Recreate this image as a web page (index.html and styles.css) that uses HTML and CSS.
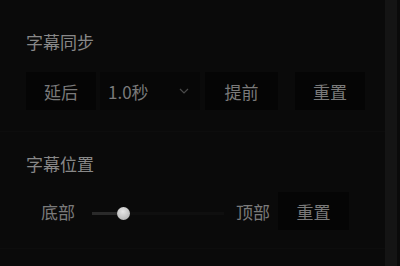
FILE: index.html
```html
<!DOCTYPE html>
<html lang="zh-CN">

<head>
    <meta charset="UTF-8">
    <meta name="viewport" content="width=device-width, initial-scale=1.0">
    <title>字幕设置</title>
    <link rel="stylesheet" href="styles.css">
</head>

<body>
    <div class="layout">
        <div class="panel">
            <div class="section sync">
                <h3>字幕同步</h3>
                <div class="row">
                    <button class="btn btn-delay">延后</button>
                    <div class="select">
                        <span>1.0秒</span>
                        <svg class="chevron" width="10" height="6" viewBox="0 0 10 6">
                            <path d="M1 1 L5 5 L9 1" fill="none" stroke="#4a4a4a" stroke-width="1.2"/>
                        </svg>
                    </div>
                    <button class="btn btn-ahead">提前</button>
                    <button class="btn btn-reset">重置</button>
                </div>
            </div>

            <div class="section position">
                <h3>字幕位置</h3>
                <div class="row">
                    <span class="label label-bottom">底部</span>
                    <div class="slider">
                        <div class="slider-fill"></div>
                        <div class="slider-thumb"></div>
                    </div>
                    <span class="label label-top">顶部</span>
                    <button class="btn btn-reset2">重置</button>
                </div>
            </div>
        </div>
        <div class="scrollbar"></div>
    </div>
</body>

</html>
```

FILE: styles.css
```css
body {
    font-family: "Noto Sans CJK SC", "Noto Sans", sans-serif;
    margin: 0;
    background-color: #0a0a0a;
    color: #7a7a7a;
}

.layout {
    display: flex;
    height: 266px;
}

.panel {
    width: 385px;
}

.scrollbar {
    width: 12px;
    background-color: #141414;
}

.section {
    padding-left: 26px;
    border-bottom: 1px solid #0d0d0d;
}

.section h3 {
    font-size: 17px;
    font-weight: normal;
    color: #888888;
    line-height: 24px;
    margin: 0;
}

.sync {
    padding-top: 30px;
    padding-bottom: 21px;
}

.position {
    padding-top: 20px;
    padding-bottom: 18px;
}

.sync h3 {
    margin-bottom: 18px;
}

.position h3 {
    margin-bottom: 16px;
}

.row {
    display: flex;
    align-items: center;
}

.btn {
    font-family: inherit;
    font-size: 17px;
    color: #7a7a7a;
    background-color: #050505;
    border: none;
    height: 38px;
    padding: 0;
    width: 70px;
}

.select {
    display: flex;
    align-items: center;
    justify-content: space-between;
    width: 100px;
    height: 38px;
    margin-left: 4px;
    padding: 0 11px 0 8px;
    box-sizing: border-box;
    background-color: #070707;
    font-size: 17px;
}

.btn-ahead {
    margin-left: 5px;
    width: 73px;
}

.btn-reset {
    margin-left: 17px;
}

.label {
    font-size: 17px;
}

.label-bottom {
    margin-left: 15px;
}

.slider {
    position: relative;
    width: 132px;
    height: 3px;
    margin-left: 17px;
    margin-top: 4px;
    background-color: #0f0f0f;
}

.slider-fill {
    width: 31px;
    height: 3px;
    background-color: #2a2a2a;
}

.slider-thumb {
    position: absolute;
    left: 25px;
    top: -5px;
    width: 13px;
    height: 13px;
    border-radius: 50%;
    background: radial-gradient(circle at 45% 35%, #e6e6e6, #a8a8a8);
}

.label-top {
    margin-left: 12px;
}

.btn-reset2 {
    margin-left: 8px;
    width: 71px;
}
```
